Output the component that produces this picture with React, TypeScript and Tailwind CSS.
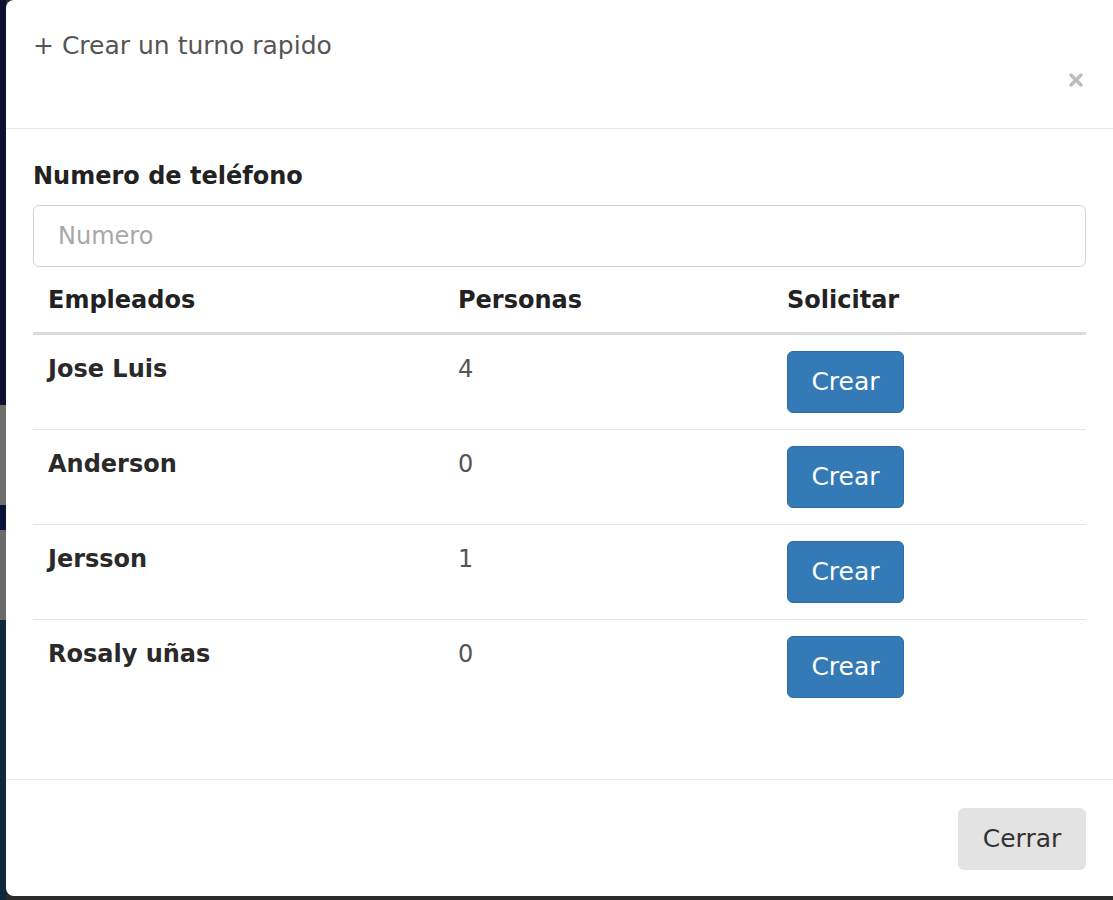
import { X } from "lucide-react";

const empleados = [
  { nombre: "Jose Luis", personas: 4 },
  { nombre: "Anderson", personas: 0 },
  { nombre: "Jersson", personas: 1 },
  { nombre: "Rosaly uñas", personas: 0 },
];

const App = () => {
  return (
    <div className="flex h-[900px] w-full bg-[#2b2b2b] font-['DejaVu_Sans',sans-serif] overflow-hidden">
      {/* Backdrop strip */}
      <div className="flex w-[6px] flex-col">
        <div className="h-[405px] bg-[#0b1030]" />
        <div className="h-[100px] bg-[#6e6e6e]" />
        <div className="h-[25px] bg-[#0a1238]" />
        <div className="h-[90px] bg-[#6a6a6a]" />
        <div className="flex-1 bg-[#0e2a3a]" />
      </div>

      {/* Modal */}
      <div className="flex h-[896px] flex-1 flex-col rounded-l-lg bg-white">
        {/* Header */}
        <div className="flex h-[129px] justify-between border-b border-[#e8e8e8] px-[27px] pt-[28px]">
          <h4 className="text-[25px] leading-[36px] text-[#555]">+ Crear un turno rapido</h4>
          <button className="mt-[40px] h-[24px] text-[#bdbdbd]">
            <X className="h-[20px] w-[20px]" strokeWidth={4} />
          </button>
        </div>

        {/* Body */}
        <div className="flex-1 px-[27px] pt-[29px]">
          <label className="block text-[24px] font-bold leading-[36px] text-[#222]">
            Numero de teléfono
          </label>
          <input
            className="mt-[11px] h-[62px] w-full rounded-md border border-[#d4d4d4] px-[24px] text-[24px] text-[#555] placeholder:text-[#a8a8a8] outline-none"
            placeholder="Numero"
          />

          <div className="grid grid-cols-[410px_329px_1fr]">
            <div className="border-b-[3px] border-[#dcdcdc] px-[15px] pt-[15px] pb-[14px] text-[24px] font-bold leading-[36px] text-[#222]">
              Empleados
            </div>
            <div className="border-b-[3px] border-[#dcdcdc] px-[15px] pt-[15px] pb-[14px] text-[24px] font-bold leading-[36px] text-[#222]">
              Personas
            </div>
            <div className="border-b-[3px] border-[#dcdcdc] px-[15px] pt-[15px] pb-[14px] text-[24px] font-bold leading-[36px] text-[#222]">
              Solicitar
            </div>

            {empleados.map((e, i) => (
              <div key={e.nombre} className="contents">
                <div
                  className={`px-[15px] py-[16px] text-[24px] font-bold leading-[36px] text-[#2a2a2a] ${
                    i > 0 ? "border-t border-[#e6e6e6]" : ""
                  }`}
                >
                  {e.nombre}
                </div>
                <div
                  className={`px-[15px] py-[16px] text-[24px] leading-[36px] text-[#555] ${
                    i > 0 ? "border-t border-[#e6e6e6]" : ""
                  }`}
                >
                  {e.personas}
                </div>
                <div className={`px-[15px] py-[16px] ${i > 0 ? "border-t border-[#e6e6e6]" : ""}`}>
                  <button className="h-[62px] w-[117px] rounded-md border border-[#2e6da4] bg-[#337ab7] text-[25px] text-white">
                    Crear
                  </button>
                </div>
              </div>
            ))}
          </div>
        </div>

        {/* Footer */}
        <div className="flex justify-end border-t border-[#ececec] px-[27px] pt-[28px] pb-[26px]">
          <button className="h-[62px] w-[128px] rounded-md bg-[#e3e3e3] text-[25px] text-[#333]">
            Cerrar
          </button>
        </div>
      </div>
    </div>
  );
};

export default App;
